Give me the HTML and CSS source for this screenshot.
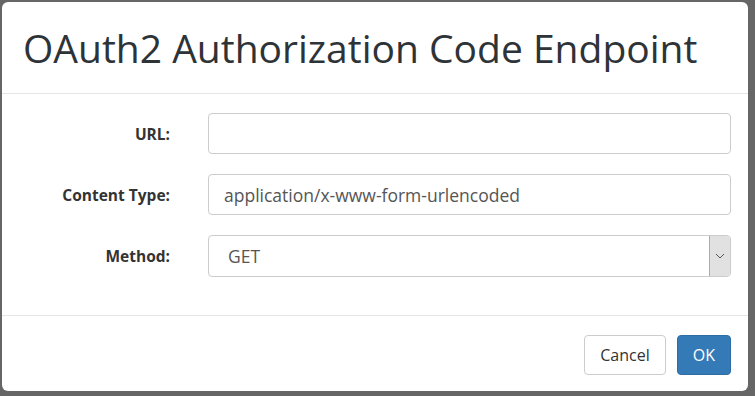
FILE: index.html
```html
<!DOCTYPE html>
<html lang="en">
<head>
    <meta charset="UTF-8">
    <meta name="viewport" content="width=device-width, initial-scale=1.0">
    <title>OAuth2 Authorization Code Endpoint</title>
    <link rel="stylesheet" href="styles.css">
</head>
<body>
    <div class="modal">
<!--  header  -->
  <div class="modal-header">
    <h4 class="modal-title">OAuth2 Authorization Code Endpoint</h4>
  </div>
<!--  form rows  -->
  <div class="modal-body">
    <div class="form-group">
      <label class="control-label">URL:</label>
      <input class="form-control" type="text" value="">
    </div>
    <div class="form-group">
      <label class="control-label">Content Type:</label>
      <input class="form-control" type="text" value="application/x-www-form-urlencoded">
    </div>
    <div class="form-group">
      <label class="control-label">Method:</label>
      <div class="select-wrap">
        <select class="form-control select">
          <option>GET</option>
          <option>POST</option>
        </select>
        <span class="select-arrow">
          <svg width="10" height="6" viewBox="0 0 10 6"><path d="M1 1 L5 5 L9 1" fill="none" stroke="#555" stroke-width="1"/></svg>
        </span>
      </div>
    </div>
  </div>
<!--  buttons  -->
  <div class="modal-footer">
    <button class="btn btn-default">Cancel</button>
    <button class="btn btn-primary">OK</button>
  </div>
</div>
</body>
</html>
```

FILE: styles.css
```css
body {
margin:0;
padding:2px 7px 0 2px;
background-color: #666;
box-sizing:border-box;
font-family: "Open Sans", sans-serif;
color:#333;
}

.modal {
background:#fff;
border-radius:6px;
height:389px;
display:flex;
flex-direction:column;
}
/* header */
.modal-header {
height:91px;
padding:0 21px;
border-bottom:1px solid #e5e5e5;
display:flex;
align-items:center;
}
.modal-title {
margin:0;
font-size:39px;
font-weight:normal;
line-height:42px;
color:#2e3338;
}
/* form rows */
.modal-body {
padding:19px 17px 18px 0;
flex:1;
}
.form-group {
display:flex;
align-items:center;
margin-bottom:20px;
}
.form-group:last-child {
margin-bottom:0;
}
.control-label {
width:168px;
flex:none;
text-align:right;
font-size:15.5px;
font-weight:bold;
margin-right:38px;
}
.form-control {
flex:1;
box-sizing:border-box;
height:41px;
padding:0 15px;
border:1px solid #ccc;
border-radius:4px;
font-family: "Open Sans", sans-serif;
font-size:17.5px;
color:#555;
background:#fff;
}
.select-wrap {
flex:1;
position:relative;
display:flex;
}
.select {
appearance:none;
-webkit-appearance:none;
padding-left:19px;
height:42px;
}
/* fake native arrow button */
.select-arrow {
position:absolute;
top:1px;
right:1px;
bottom:1px;
width:20px;
background:#e1e1e1;
border-left:1px solid #adadad;
border-radius:0 3px 3px 0;
display:flex;
align-items:center;
justify-content:center;
}
/* footer */
.modal-footer {
border-top:1px solid #e5e5e5;
padding:19px 17px 16px 0;
display:flex;
justify-content:flex-end;
gap:11px;
}
.btn {
height:40px;
padding:0 15px;
border-radius:4px;
font-family: "Open Sans", sans-serif;
font-size:16px;
border:1px solid #ccc;
cursor:pointer;
}
.btn-default {
background:#fff;
color:#333;
}
.btn-primary {
background:#337ab7;
border-color:#2e6da4;
color:#fff;
}
```
